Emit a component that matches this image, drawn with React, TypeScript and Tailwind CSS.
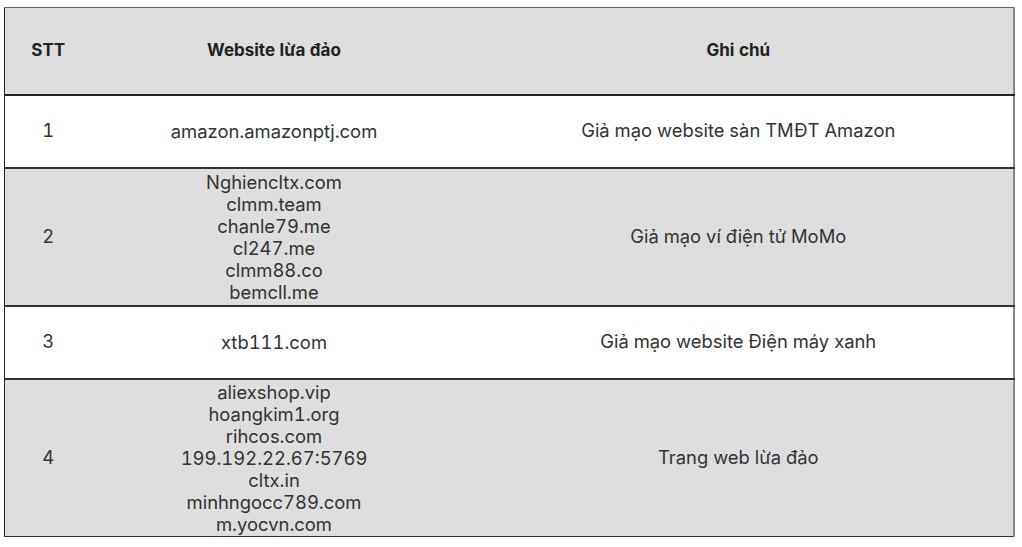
const rows = [
  { stt: "1", sites: ["amazon.amazonptj.com"], note: "Giả mạo website sàn TMĐT Amazon", bg: "bg-white", h: "h-[73px]" },
  {
    stt: "2",
    sites: ["Nghiencltx.com", "clmm.team", "chanle79.me", "cl247.me", "clmm88.co", "bemcll.me"],
    note: "Giả mạo ví điện tử MoMo",
    bg: "bg-[#dedede]",
    h: "h-[138px]",
  },
  { stt: "3", sites: ["xtb111.com"], note: "Giả mạo website Điện máy xanh", bg: "bg-white", h: "h-[73px]" },
  {
    stt: "4",
    sites: ["aliexshop.vip", "hoangkim1.org", "rihcos.com", "199.192.22.67:5769", "cltx.in", "minhngocc789.com", "m.yocvn.com"],
    note: "Trang web lừa đảo",
    bg: "bg-[#dedede]",
    h: "h-[158px]",
  },
];

export default function App() {
  return (
    <div className="min-h-[547px] w-[1022px] bg-white pt-[7px] pl-[4px] font-['Inter','Noto_Sans',sans-serif] text-[#333] tabular-nums">
      <table className="w-[1011px] border-collapse border-t border-l border-r-2 border-b border-t-[#666] border-l-[#222] border-r-[#888] border-b-[#333]">
        <thead>
          <tr className="h-[87px] bg-[#dedede] border-b-2 border-[#222]">
            <th className="w-[87px] p-0 text-center text-[17px] font-bold text-[#222]">STT</th>
            <th className="w-[365px] p-0 text-center text-[17px] font-bold text-[#222]">Website lừa đảo</th>
            <th className="p-0 pl-[7px] text-center text-[17px] font-bold text-[#222]">Ghi chú</th>
          </tr>
        </thead>
        <tbody>
          {rows.map((r) => (
            <tr key={r.stt} className={`${r.bg} ${r.h} border-b-2 border-[#333] last:border-b-0`}>
              <td className="p-0 text-center text-[18.4px]">{r.stt}</td>
              <td className="p-0 text-center text-[18.4px] leading-[22px]">
                {r.sites.map((s) => (
                  <div key={s}>{s}</div>
                ))}
              </td>
              <td className="p-0 pl-[7px] text-center text-[18.4px]">{r.note}</td>
            </tr>
          ))}
        </tbody>
      </table>
    </div>
  );
}
